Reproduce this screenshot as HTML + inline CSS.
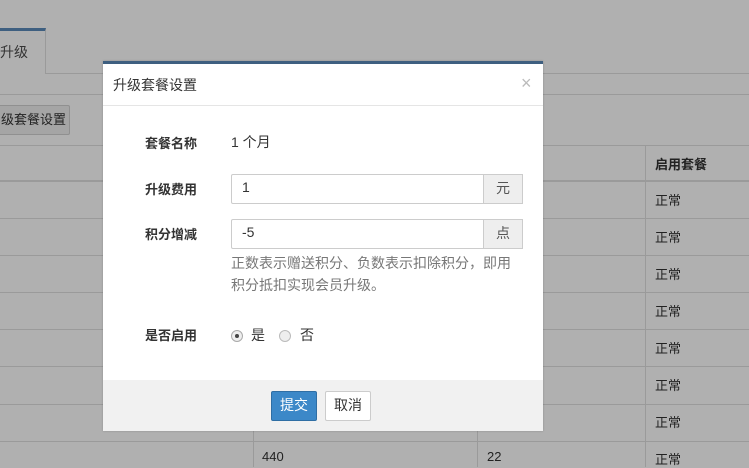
<!DOCTYPE html>
<html><head><meta charset="utf-8"><style>
*{box-sizing:border-box;margin:0;padding:0}
body{width:749px;height:467px;overflow:hidden;background:#b0b0b0;font-family:"Liberation Sans","Noto Sans CJK SC",sans-serif;font-size:13px;color:#333;position:relative}
.a{position:absolute}
.hl{position:absolute;height:1px;background:#9a9a9a}
.vl{position:absolute;width:1px;background:#9a9a9a}
.cell{position:absolute;font-size:13px;color:#222}
</style></head><body>
<div class="a" style="left:0;top:28px;width:46px;height:46px;border-top:3px solid #3e5f80;border-right:1px solid #9a9a9a;background:#b0b0b0"></div>
<div class="a" style="left:0;top:42px;font-size:14px;color:#333">升级</div>
<div class="hl" style="left:46px;top:73px;width:703px"></div>
<div class="hl" style="left:0;top:94px;width:749px"></div>
<div class="a" style="left:-2px;top:105px;width:72px;height:30px;background:#a5a5a5;border:1px solid #909090;border-radius:2px;font-size:13px;line-height:27px;padding-left:2px;color:#222">级套餐设置</div>
<div class="hl" style="left:0;top:145px;width:749px"></div>
<div class="hl" style="left:0;top:180px;width:749px;height:2px"></div>
<div class="hl" style="left:0;top:218px;width:749px"></div>
<div class="hl" style="left:0;top:255px;width:749px"></div>
<div class="hl" style="left:0;top:292px;width:749px"></div>
<div class="hl" style="left:0;top:329px;width:749px"></div>
<div class="hl" style="left:0;top:366px;width:749px"></div>
<div class="hl" style="left:0;top:404px;width:749px"></div>
<div class="hl" style="left:0;top:441px;width:749px"></div>
<div class="vl" style="left:253px;top:145px;height:322px"></div>
<div class="vl" style="left:477px;top:145px;height:322px"></div>
<div class="vl" style="left:645px;top:145px;height:322px"></div>
<div class="cell" style="left:655px;top:154px;font-weight:bold">启用套餐</div>
<div class="cell" style="left:655px;top:190px">正常</div>
<div class="cell" style="left:655px;top:227px">正常</div>
<div class="cell" style="left:655px;top:264px">正常</div>
<div class="cell" style="left:655px;top:301px">正常</div>
<div class="cell" style="left:655px;top:338px">正常</div>
<div class="cell" style="left:655px;top:375px">正常</div>
<div class="cell" style="left:655px;top:412px">正常</div>
<div class="cell" style="left:655px;top:449px">正常</div>
<div class="cell" style="left:262px;top:449px">440</div>
<div class="cell" style="left:487px;top:449px">22</div>
<div class="a" style="left:103px;top:61px;width:440px;height:370px;background:#fff;border-top:3px solid #3e5f80;box-shadow:0 0 2px rgba(0,0,0,.2)">
 <div class="a" style="left:0;top:0;width:440px;height:42px;border-bottom:1px solid #e5e5e5"></div>
 <div class="a" style="left:10px;top:11px;font-size:14px;color:#333">升级套餐设置</div>
 <div class="a" style="left:418px;top:9px;font-size:18px;color:#bbb">×</div>
 <div class="a" style="left:42px;top:69px;font-weight:bold">套餐名称</div>
 <div class="a" style="left:128px;top:68px;font-size:14px">1 个月</div>
 <div class="a" style="left:42px;top:115px;font-weight:bold">升级费用</div>
 <div class="a" style="left:128px;top:110px;width:292px;height:30px;border:1px solid #ccc;border-radius:2px"></div>
 <div class="a" style="left:139px;top:115px;font-size:14px">1</div>
 <div class="a" style="left:380px;top:110px;width:40px;height:30px;background:#eee;border:1px solid #ccc;text-align:center;line-height:27px;color:#555;font-size:14px">元</div>
 <div class="a" style="left:42px;top:160px;font-weight:bold">积分增减</div>
 <div class="a" style="left:128px;top:155px;width:292px;height:30px;border:1px solid #ccc;border-radius:2px"></div>
 <div class="a" style="left:139px;top:160px;font-size:14px">-5</div>
 <div class="a" style="left:380px;top:155px;width:40px;height:30px;background:#eee;border:1px solid #ccc;text-align:center;line-height:27px;color:#555;font-size:14px">点</div>
 <div class="a" style="left:128px;top:188px;width:286px;color:#777;line-height:22px;font-size:14px">正数表示赠送积分、负数表示扣除积分，即用积分抵扣实现会员升级。</div>
 <div class="a" style="left:42px;top:261px;font-weight:bold">是否启用</div>
 <div class="a" style="left:128px;top:266px;width:12px;height:12px;border:1px solid #aaa;border-radius:50%;background:#eee"><div style="position:absolute;left:3px;top:3px;width:4px;height:4px;border-radius:50%;background:#444"></div></div>
 <div class="a" style="left:148px;top:261px;font-size:14px">是</div>
 <div class="a" style="left:176px;top:266px;width:12px;height:12px;border:1px solid #bbb;border-radius:50%;background:#eee"></div>
 <div class="a" style="left:197px;top:261px;font-size:14px">否</div>
 <div class="a" style="left:0;top:316px;width:440px;height:51px;background:#f1f1f1"></div>
 <div class="a" style="left:168px;top:327px;width:46px;height:30px;background:#3c88c8;border:1px solid #2f6ea4;border-radius:2px;color:#fff;text-align:center;line-height:27px;font-size:14px">提交</div>
 <div class="a" style="left:222px;top:327px;width:46px;height:30px;background:#fff;border:1px solid #ccc;border-radius:2px;text-align:center;line-height:27px;font-size:14px">取消</div>
</div>
</body></html>
